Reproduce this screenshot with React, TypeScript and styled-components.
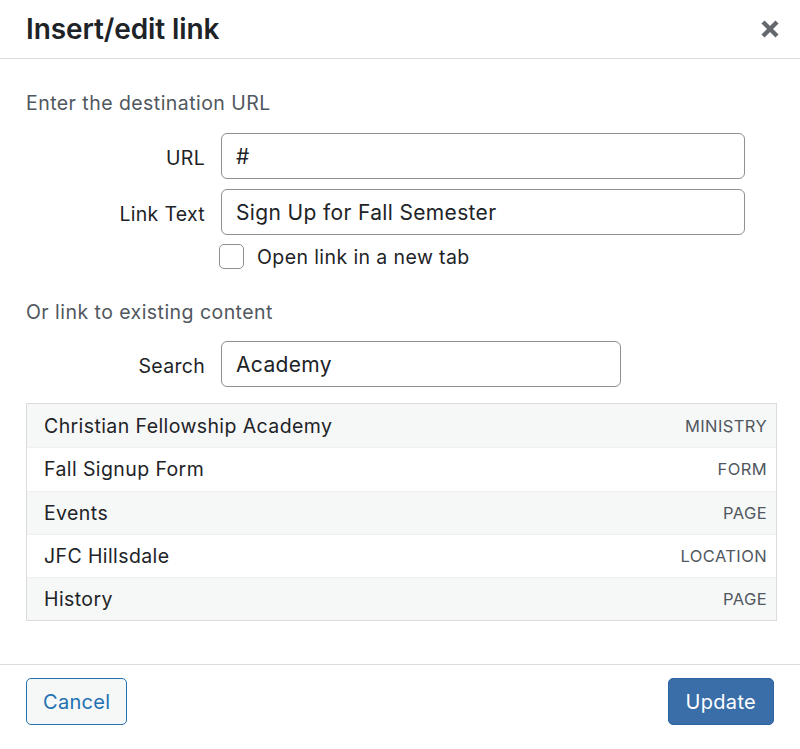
import React from "react";
import styled, { createGlobalStyle } from "styled-components";

const Global = createGlobalStyle`
  html, body { margin: 0; padding: 0; background: #fff; }
  body { font-family: Inter, "Noto Sans", "Liberation Sans", sans-serif; color: #1d2327; }
  * { box-sizing: border-box; }
`;

const Dialog = styled.div`
  width: 800px;
  height: 749px;
  display: flex;
  flex-direction: column;
  background: #fff;
`;

const Header = styled.header`
  height: 59px;
  display: flex;
  align-items: center;
  justify-content: space-between;
  padding: 0 18px 0 26px;
  border-bottom: 1.5px solid #dcdcde;
`;

const Title = styled.h1`
  margin: 0;
  font-size: 28px;
  font-weight: 600;
  color: #1d2327;
  letter-spacing: -0.1px;
`;

const CloseButton = styled.button`
  border: 0;
  background: none;
  padding: 0;
  width: 24px;
  height: 24px;
  display: flex;
  align-items: center;
  justify-content: center;
  cursor: pointer;
`;

const Body = styled.div`
  padding: 32px 23px 0 26px;
  flex: 1;
`;

const SectionTitle = styled.div<{ $top?: number }>`
  font-size: 19.5px;
  letter-spacing: 0.45px;
  line-height: 24px;
  color: #50575e;
  margin-top: ${(p) => p.$top ?? 0}px;
`;

const FieldRow = styled.div<{ $top: number }>`
  display: grid;
  grid-template-columns: 179px 1fr;
  column-gap: 16px;
  align-items: center;
  margin-top: ${(p) => p.$top}px;
`;

const Label = styled.label`
  text-align: right;
  font-size: 19.5px;
  letter-spacing: 0.3px;
  color: #1d2327;
  padding-top: 3px;
`;

const Input = styled.input<{ $width: number }>`
  height: 46px;
  width: ${(p) => p.$width}px;
  border: 1.5px solid #8c8f94;
  border-radius: 6px;
  padding: 0 14px;
  font-family: inherit;
  font-size: 21px;
  letter-spacing: 0.35px;
  color: #1d2327;
  background: #fff;
  outline: none;
`;

const CheckRow = styled.label`
  display: flex;
  align-items: center;
  gap: 13px;
  margin: 9px 0 0 193px;
  font-size: 19.5px;
  letter-spacing: 0.4px;
  color: #1d2327;
`;

const Box = styled.span`
  width: 25px;
  height: 25px;
  border: 1.5px solid #8c8f94;
  border-radius: 5px;
  background: #fff;
  display: inline-block;
`;

const Results = styled.ul`
  list-style: none;
  margin: 16px 0 0 0;
  padding: 0;
  border: 1.5px solid #dcdcde;
`;

const ResultItem = styled.li<{ $odd: boolean }>`
  height: 43.3px;
  display: flex;
  align-items: center;
  justify-content: space-between;
  padding: 0 9px 0 17px;
  background: ${(p) => (p.$odd ? "#f6f7f7" : "#fff")};
  & + & { border-top: 1px solid #f0f0f1; }
`;

const ItemTitle = styled.span`
  font-size: 19.5px;
  letter-spacing: 0.4px;
  color: #1d2327;
`;

const ItemType = styled.span`
  font-size: 16.5px;
  letter-spacing: 0.4px;
  color: #50575e;
  text-transform: uppercase;
`;

const Footer = styled.footer`
  border-top: 1.5px solid #dcdcde;
  padding: 13px 26px 24px 26px;
  display: flex;
  justify-content: space-between;
  align-items: center;
`;

const Button = styled.button<{ $primary?: boolean }>`
  height: 47px;
  padding: 0 ${(p) => (p.$primary ? 17 : 16)}px;
  border-radius: 5px;
  font-family: inherit;
  font-size: 20px;
  letter-spacing: 0.3px;
  cursor: pointer;
  border: 1.5px solid ${(p) => (p.$primary ? "#2c64a3" : "#2271b1")};
  background: ${(p) => (p.$primary ? "#3a6ea8" : "#f6f7f7")};
  color: ${(p) => (p.$primary ? "#fff" : "#2271b1")};
`;

const results = [
  { title: "Christian Fellowship Academy", type: "Ministry" },
  { title: "Fall Signup Form", type: "Form" },
  { title: "Events", type: "Page" },
  { title: "JFC Hillsdale", type: "Location" },
  { title: "History", type: "Page" },
];

export default function App() {
  return (
    <>
      <Global />
      <Dialog>
        <Header>
          <Title>Insert/edit link</Title>
          <CloseButton aria-label="Close">
            <svg width="20" height="20" viewBox="0 0 20 20">
              <path d="M3 3 L17 17 M17 3 L3 17" stroke="#646970" strokeWidth="4.4" strokeLinecap="butt" />
            </svg>
          </CloseButton>
        </Header>
        <Body>
          <SectionTitle>Enter the destination URL</SectionTitle>
          <FieldRow $top={18}>
            <Label>URL</Label>
            <Input $width={524} defaultValue="#" />
          </FieldRow>
          <FieldRow $top={10}>
            <Label>Link Text</Label>
            <Input $width={524} defaultValue="Sign Up for Fall Semester" />
          </FieldRow>
          <CheckRow>
            <Box />
            Open link in a new tab
          </CheckRow>
          <SectionTitle $top={31}>Or link to existing content</SectionTitle>
          <FieldRow $top={17}>
            <Label>Search</Label>
            <Input $width={400} defaultValue="Academy" />
          </FieldRow>
          <Results>
            {results.map((r, i) => (
              <ResultItem key={i} $odd={i % 2 === 0}>
                <ItemTitle>{r.title}</ItemTitle>
                <ItemType>{r.type}</ItemType>
              </ResultItem>
            ))}
          </Results>
        </Body>
        <Footer>
          <Button>Cancel</Button>
          <Button $primary>Update</Button>
        </Footer>
      </Dialog>
    </>
  );
}
